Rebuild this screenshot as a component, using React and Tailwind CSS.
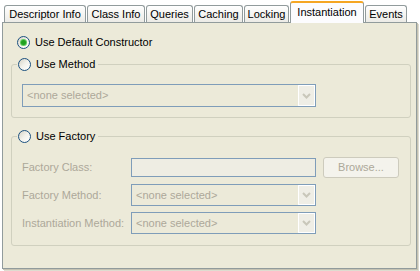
import React from "react";

const tabs = [
  { label: "Descriptor Info", w: "w-[82px]" },
  { label: "Class Info", w: "w-[58px]" },
  { label: "Queries", w: "w-[47px]" },
  { label: "Caching", w: "w-[49px]" },
  { label: "Locking", w: "w-[45px]" },
  { label: "Instantiation", w: "w-[74px]", active: true },
  { label: "Events", w: "w-[42px]" },
];

function Radio({ checked }) {
  return (
    <span className="relative flex h-[13px] w-[13px] shrink-0 items-center justify-center rounded-full border border-[#1c5180] bg-gradient-to-br from-[#d6d3c6] via-[#f3f2ec] to-white">
      {checked && (
        <span className="h-[5px] w-[5px] rounded-full bg-[#21a121] shadow-[0_0_0_1px_#5fcd5f]" />
      )}
    </span>
  );
}

function Select({ className = "" }) {
  return (
    <div
      className={`flex h-[22px] items-stretch border border-[#7f9db9] bg-[#ecead9] ${className}`}
    >
      <span className="flex flex-1 items-center pl-[4px] text-[#aca899]">
        &lt;none selected&gt;
      </span>
      <span className="flex w-[17px] items-center justify-center border border-white bg-[#efeee6]">
        <svg width="9" height="6" viewBox="0 0 9 6">
          <path
            d="M1 1 L4.5 4.5 L8 1"
            fill="none"
            stroke="#c9c7ba"
            strokeWidth="2"
          />
        </svg>
      </span>
    </div>
  );
}

export default function App() {
  return (
    <div
      className="h-[271px] w-[420px] bg-white pl-[2px] text-[11px] leading-[13px] text-black"
      style={{ fontFamily: '"Liberation Sans", Arial, sans-serif' }}
    >
      <div className="flex h-[22px] items-end gap-[1px] pl-[2px]">
        {tabs.map((t) =>
          t.active ? (
            <div
              key={t.label}
              className={`relative z-10 mb-[-1px] flex h-[22px] ${t.w} items-start justify-center rounded-t-[3px] border-x border-t-[2px] border-x-[#919b9c] border-t-[#f5a623] bg-[#fcfcfe] pt-[3px]`}
            >
              {t.label}
            </div>
          ) : (
            <div
              key={t.label}
              className={`flex h-[17px] ${t.w} items-center justify-center rounded-t-[3px] border-x border-t border-[#919b9c] bg-gradient-to-b from-white to-[#ecebe6]`}
            >
              {t.label}
            </div>
          )
        )}
      </div>
      <div className="h-[247px] w-[415px] border border-[#919b9c] bg-[#ecead9] pl-[8px] pr-[5px] pt-[12px] shadow-[1px_1px_0_#c5c2b2,2px_2px_0_#dedcd0]">
        <div className="ml-[6px] flex h-[14px] items-center gap-[5px]">
          <Radio checked />
          <span>Use Default Constructor</span>
        </div>

        <fieldset className="mt-[8px] w-[400px] rounded-[3px] border border-[#d0d0bf] pl-[5px]">
          <legend className="flex h-[14px] items-center gap-[5px] px-[1px] pr-[3px]">
            <Radio />
            <span>Use Method</span>
          </legend>
          <div className="pl-[5px] pt-[13px] pb-[10px]">
            <Select className="h-[23px] w-[294px]" />
          </div>
        </fieldset>

        <fieldset className="mt-[11px] w-[400px] rounded-[3px] border border-[#d0d0bf] pl-[5px]">
          <legend className="flex h-[14px] items-center gap-[5px] px-[1px] pr-[3px]">
            <Radio />
            <span>Use Factory</span>
          </legend>
          <div className="flex flex-col gap-[6px] pl-[5px] pt-[13px] pb-[11px] text-[#aca899]">
            <div className="flex h-[22px] items-center">
              <span className="w-[109px]">Factory Class:</span>
              <div className="h-[19px] w-[185px] border border-[#7f9db9] bg-[#eeede3]" />
              <div className="ml-[7px] flex h-[21px] w-[76px] items-center justify-center rounded-[3px] border border-[#cdcbbd] bg-[#f4f3ec] text-[#aca899]">
                Browse...
              </div>
            </div>
            <div className="flex h-[22px] items-center">
              <span className="w-[109px]">Factory Method:</span>
              <Select className="w-[185px]" />
            </div>
            <div className="flex h-[22px] items-center">
              <span className="w-[109px]">Instantiation Method:</span>
              <Select className="w-[185px]" />
            </div>
          </div>
        </fieldset>
      </div>
    </div>
  );
}
